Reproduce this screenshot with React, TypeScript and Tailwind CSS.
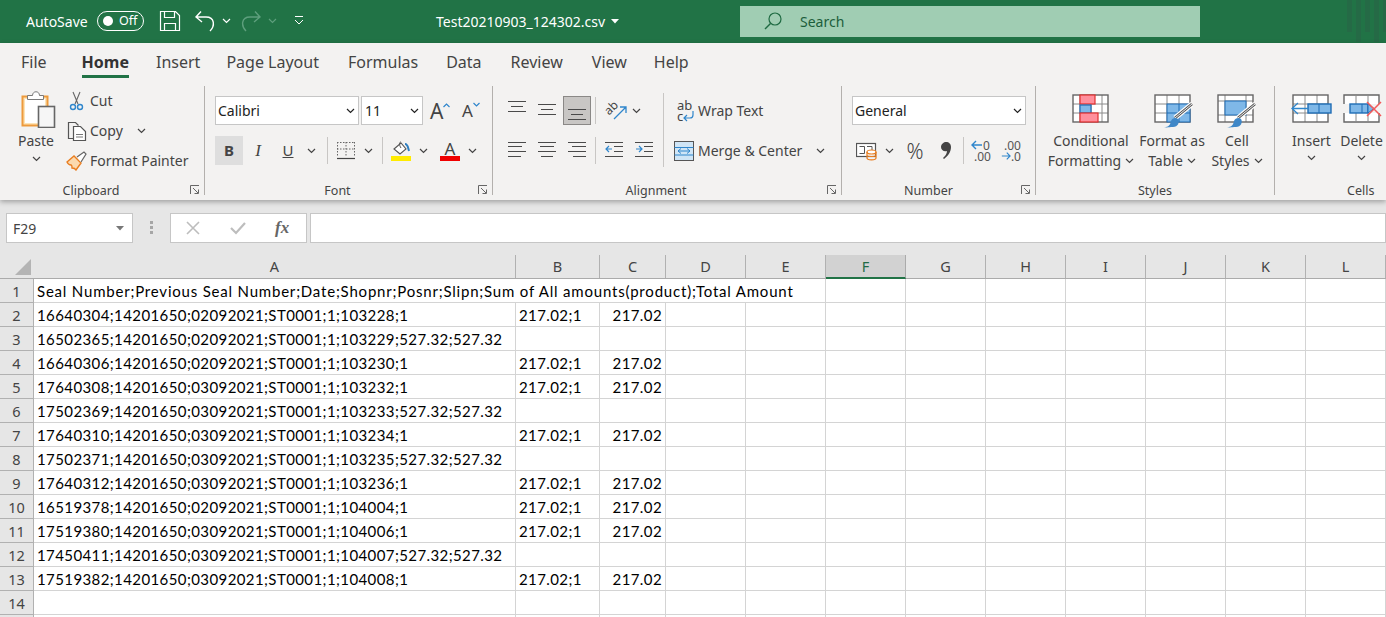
import React from "react";

const rows: [string, string, string][] = [
  ["16640304;14201650;02092021;ST0001;1;103228;1", "217.02;1", "217.02"],
  ["16502365;14201650;02092021;ST0001;1;103229;527.32;527.32", "", ""],
  ["16640306;14201650;02092021;ST0001;1;103230;1", "217.02;1", "217.02"],
  ["17640308;14201650;03092021;ST0001;1;103232;1", "217.02;1", "217.02"],
  ["17502369;14201650;03092021;ST0001;1;103233;527.32;527.32", "", ""],
  ["17640310;14201650;03092021;ST0001;1;103234;1", "217.02;1", "217.02"],
  ["17502371;14201650;03092021;ST0001;1;103235;527.32;527.32", "", ""],
  ["17640312;14201650;03092021;ST0001;1;103236;1", "217.02;1", "217.02"],
  ["16519378;14201650;02092021;ST0001;1;104004;1", "217.02;1", "217.02"],
  ["17519380;14201650;03092021;ST0001;1;104006;1", "217.02;1", "217.02"],
  ["17450411;14201650;03092021;ST0001;1;104007;527.32;527.32", "", ""],
  ["17519382;14201650;03092021;ST0001;1;104008;1", "217.02;1", "217.02"],
];

const columns = ["A", "B", "C", "D", "E", "F", "G", "H", "I", "J", "K", "L"];
const gridCols = "grid grid-cols-[34px_482px_84px_66px_80px_80px_80px_80px_80px_80px_80px_80px_80px]";
const cellFont = "font-['Lato',sans-serif] text-[15px] tracking-[0.4px] text-black";
const cell = "border-r border-b border-[#d4d4d4] h-6 overflow-hidden whitespace-nowrap leading-[24px]";
const rowHead = "h-6 bg-[#e6e6e6] border-r border-b border-[#b1b1b1] text-center leading-[24px] text-[#444] font-['Noto_Sans',sans-serif] text-[14.5px] tracking-normal";

function Chev({ color = "#444", className = "" }: { color?: string; className?: string }) {
  return (
    <svg width="9" height="6" viewBox="0 0 9 6" className={className}>
      <path d="M1 1l3.500 3.500L8 1" fill="none" stroke={color} strokeWidth="1.2" />
    </svg>
  );
}

function Launcher() {
  return (
    <svg width="10" height="10" viewBox="0 0 10 10" className="absolute right-[4px] top-0">
      <path d="M.5 9V.5H9" fill="none" stroke="#666" />
      <path d="M3 3l5 5M8.500 4.500v4h-4" fill="none" stroke="#666" />
    </svg>
  );
}

function Group({ width, label, labelPad = "", children }: { width: string; label: string; labelPad?: string; children: React.ReactNode }) {
  return (
    <div className={`${width} h-[109px] shrink-0 flex flex-col border-r border-[#b3b0ad]`}>
      <div className="flex-1 min-h-0">{children}</div>
      <div className="relative h-[10px] text-center text-[12.5px] text-[#444]">
        <div className={`leading-[12px] ${labelPad}`}>{label}</div>
        {label !== "Styles" && <Launcher />}
      </div>
    </div>
  );
}

function Lines({ kind }: { kind: "top" | "middle" | "bottom" | "left" | "center" | "right" }) {
  const sets: Record<string, string> = {
    top: "M0 3.500h18M3 8.500h12M0 13.500h18",
    middle: "M0 6.500h18M3 11.500h12M0 16.500h18",
    bottom: "M0 11.500h18M3 16.500h12M0 21.500h18",
    left: "M0 4.500h18M0 8.500h14M0 13.500h18M0 18.500h13",
    center: "M0 4.500h18M2 8.500h14M0 13.500h18M3 18.500h12",
    right: "M0 4.500h18M4 8.500h14M0 13.500h18M5 18.500h13",
  };
  return (
    <svg width="18" height="25" viewBox="0 0 18 25">
      <path d={sets[kind]} stroke="#4a4a4a" strokeWidth="1" fill="none" />
    </svg>
  );
}

function PasteIcon() {
  return (
    <svg width="36" height="38" viewBox="0 0 36 38" className="ml-[3px]">
      <rect x="2.500" y="6.500" width="25" height="29" fill="#fde3b5" stroke="#ed9a3c" strokeWidth="2" />
      <rect x="5" y="9" width="20" height="24" fill="#fff" />
      <path d="M7.500 9.500v-4h5c0-5 7-5 7 0h4v4z" fill="#fff" stroke="#7a7a7a" />
      <rect x="18.500" y="16.500" width="16" height="21" fill="#f6f6f6" stroke="#666" strokeWidth="1.6" />
    </svg>
  );
}

// grid shared by the style and cell icons, 35x27 with three columns
function Grid({ dx, cols = [12, 24], rowsAt = [9, 18] }: { dx: number; cols?: number[]; rowsAt?: number[] }) {
  const d = [
    ...cols.map((c) => `M${c + dx} 1v27`),
    ...rowsAt.map((r) => `M${dx} ${r + 1}h35`),
  ].join("");
  return (
    <>
      <rect x={dx} y="1" width="35" height="27" fill="#fff" />
      <path d={d} stroke="#8a8a8a" strokeWidth="1" fill="none" />
      <rect x={dx} y="1" width="35" height="27" fill="none" stroke="#666" strokeWidth="1.4" />
    </>
  );
}

function Brush({ dx }: { dx: number }) {
  return (
    <g transform={`translate(${dx} 0)`}>
      <path d="M37 10L20 24" stroke="#fff" strokeWidth="5" />
      <path d="M37 10L20 24" stroke="#555" strokeWidth="2.800" />
      <path d="M37 10L20 24" stroke="#eee" strokeWidth="1" />
      <path d="M9 33c5 0 6-2 7-6 1-3 5-4 7-2 2 3 0 8-5 8-4 0-6 1-9 0z" fill="#3f87c7" />
    </g>
  );
}

export default function App() {
  return (
    <div className="w-[1386px] h-[617px] overflow-hidden bg-[#e6e6e6] font-['Noto_Sans',sans-serif]">
      {/* Title bar */}
      <div className="relative h-[43px] pb-[1px] bg-[#217346] flex items-center text-white">
        <span className="ml-[26px] text-[14px] w-[71px]">AutoSave</span>
        <div className="w-[47px] h-[20px] rounded-full border border-white flex items-center">
          <span className="ml-[5px] w-[10px] h-[10px] rounded-full bg-white" />
          <span className="ml-[6px] text-[12.5px]">Off</span>
        </div>
        <svg width="22" height="22" viewBox="0 0 22 22" className="ml-[15px]">
          <path d="M1.500 1.500h15l4 4v15h-19z M5.500 1.500v6h10v-6 M5.500 20.500v-7h11v7" fill="none" stroke="#fff" strokeWidth="1.2" />
        </svg>
        <svg width="22" height="22" viewBox="0 0 22 22" className="ml-[13px]">
          <path d="M7 1.500L2 7l6 5M2 7h10c9 0 9 9 4 14" fill="none" stroke="#fff" strokeWidth="1.4" />
        </svg>
        <Chev color="#fff" className="ml-[6px]" />
        <svg width="22" height="22" viewBox="0 0 22 22" className="ml-[9px]">
          <path d="M15 1.500L20 7l-6 5M20 7H10c-9 0-9 9-4 14" fill="none" stroke="#5e9f7d" strokeWidth="1.4" />
        </svg>
        <Chev color="#5e9f7d" className="ml-[6px]" />
        <svg width="10" height="10" viewBox="0 0 10 10" className="ml-[17px]">
          <path d="M1 .5h8M1 4l4 4 4-4" fill="none" stroke="#fff" />
        </svg>
        <span className="ml-[132px] text-[14px] w-[175px]">Test20210903_124302.csv</span>
        <svg width="8" height="5" viewBox="0 0 8 5"><path d="M0 0h8L4 4.500z" fill="#fff" /></svg>
        <div className="ml-[121px] w-[460px] h-[31px] bg-[#a0cdb3] flex items-center">
          <svg width="18" height="18" viewBox="0 0 18 18" className="ml-[24px]">
            <circle cx="11" cy="7" r="6" fill="none" stroke="#1e6a42" strokeWidth="1.2" />
            <path d="M6.500 11.500L1 17" stroke="#1e6a42" strokeWidth="1.4" />
          </svg>
          <span className="ml-[18px] text-[14px] text-[#1d5e3b]">Search</span>
        </div>
        <div className="ml-auto self-start flex gap-[4px] w-[39px] overflow-hidden">
          <span className="w-[5px] h-[32px] shrink-0 bg-[#256a46]" />
          <span className="w-[5px] h-[42px] shrink-0 bg-[#256a46]" />
          <span className="w-[5px] h-[32px] shrink-0 bg-[#256a46]" />
          <span className="w-[5px] h-[42px] shrink-0 bg-[#256a46]" />
          <span className="w-[5px] h-[32px] shrink-0 bg-[#256a46]" />
        </div>
      </div>

      {/* Ribbon */}
      <div className="relative h-[157px] bg-[#f3f2f1] shadow-[0_2px_5px_rgba(0,0,0,0.3)]">
        {/* Tabs */}
        <div className="h-[39px] pl-[21px] flex text-[16px] text-[#444] leading-[38px]">
          <span className="mr-[35px]">File</span>
          <span className="mr-[27px] h-[35px] font-bold text-[#333] border-b-[3px] border-[#217346]">Home</span>
          <span className="mr-[26px]">Insert</span>
          <span className="mr-[29px]">Page Layout</span>
          <span className="mr-[28px]">Formulas</span>
          <span className="mr-[29px]">Data</span>
          <span className="mr-[29px]">Review</span>
          <span className="mr-[27px]">View</span>
          <span>Help</span>
        </div>

        <div className="mt-[4px] flex text-[14px] text-[#444]">
          {/* Clipboard */}
          <Group width="w-[205px]" label="Clipboard" labelPad="pr-[22px]">
            <div className="flex">
              <div className="ml-[6px] w-[60px] pt-[4px] flex flex-col items-center">
                <PasteIcon />
                <span className="mt-[3px] leading-[20px]">Paste</span>
                <Chev className="mt-[5px]" />
              </div>
              <div className="flex flex-col">
                <div className="h-[30px] flex items-center">
                  <svg width="22" height="20" viewBox="0 0 22 20">
                    <path d="M7 1l5 12M14 1L9 13" stroke="#666" strokeWidth="1.1" fill="none" />
                    <circle cx="7" cy="16" r="2.500" fill="none" stroke="#2f86cc" strokeWidth="1.4" />
                    <circle cx="14" cy="16" r="2.500" fill="none" stroke="#2f86cc" strokeWidth="1.4" />
                  </svg>
                  <span className="ml-[2px] pb-[2px]">Cut</span>
                </div>
                <div className="h-[30px] flex items-center">
                  <svg width="22" height="20" viewBox="0 0 22 20">
                    <path d="M7.500 17.500h-5V1.500h7l3 3" fill="none" stroke="#555" strokeWidth="1.2" />
                    <path d="M7.500 5.500h7l5 5v9h-12z" fill="#fff" stroke="#555" strokeWidth="1.2" />
                    <path d="M10 13.500h7M10 16h7" stroke="#777" />
                  </svg>
                  <span className="ml-[2px] pb-[2px]">Copy</span>
                  <Chev className="ml-[14px]" />
                </div>
                <div className="h-[30px] flex items-center">
                  <svg width="22" height="20" viewBox="0 0 22 20">
                    <path d="M1 11l7-6 7 7-5 7c-1-2-3-2-4-2 0-1 0-3-1-3-1 0-3-1-4-3z" fill="#fbd9ae" stroke="#e97d1f" strokeWidth="1.4" />
                    <path d="M11 6l7-5 2 2-5 8" fill="#fff" stroke="#666" strokeWidth="1.2" />
                  </svg>
                  <span className="ml-[2px] pb-[2px]">Format Painter</span>
                </div>
              </div>
            </div>
          </Group>

          {/* Font */}
          <Group width="w-[288px]" label="Font" labelPad="pr-[22px]">
            <div className="pt-[10px] pl-[10px]">
              <div className="flex items-center h-[29px]">
                <div className="w-[144px] h-[29px] bg-white border border-[#c6c6c6] flex items-center justify-between pl-[2px] pr-[3px] text-[#222]">
                  Calibri <Chev color="#222" />
                </div>
                <div className="ml-[2px] w-[62px] h-[29px] bg-white border border-[#c6c6c6] flex items-center justify-between pl-[3px] pr-[3px] text-[#222]">
                  11 <Chev color="#222" />
                </div>
                <div className="ml-[7px] flex items-start w-[30px]">
                  <span className="text-[21px] leading-[24px]">A</span>
                  <svg width="7" height="5" viewBox="0 0 7 5" className="mt-[4px]"><path d="M.5 4l3-3 3 3" fill="none" stroke="#2f86cc" strokeWidth="1.2" /></svg>
                </div>
                <div className="ml-[2px] flex items-start">
                  <span className="text-[17px] leading-[26px]">A</span>
                  <svg width="7" height="5" viewBox="0 0 7 5" className="mt-[4px]"><path d="M.5 1l3 3 3-3" fill="none" stroke="#2f86cc" strokeWidth="1.2" /></svg>
                </div>
              </div>
              <div className="mt-[11px] flex items-center h-[29px]">
                <div className="w-[28px] h-[29px] bg-[#dedede] flex items-center justify-center font-bold text-[15px]">B</div>
                <span className="w-[30px] text-center font-['Liberation_Serif',serif] italic text-[17px]">I</span>
                <span className="w-[30px] text-center underline text-[15px]">U</span>
                <Chev className="ml-[4px]" />
                <span className="ml-[11px] w-px h-[27px] bg-[#c8c6c4]" />
                <svg width="20" height="20" viewBox="0 0 20 20" className="ml-[8px]">
                  <path d="M1.500 1v14M10 1v14M18.500 1v14M1 1.500h18M1 8h18" fill="none" stroke="#666" strokeDasharray="1.500 1.500" />
                  <path d="M1 17.500h18" stroke="#444" strokeWidth="1.2" />
                </svg>
                <Chev className="ml-[8px]" />
                <span className="ml-[9px] w-px h-[27px] bg-[#c8c6c4]" />
                <div className="ml-[8px] w-[20px] flex flex-col items-center">
                  <svg width="20" height="15" viewBox="0 0 20 15">
                    <path d="M3 8l7-6 5 6-6 5z" fill="#fff" stroke="#555" strokeWidth="1.1" />
                    <path d="M10 1c-2 0-2 3 0 6" fill="none" stroke="#555" />
                    <path d="M14 3c3 0 3 4 4 7" fill="none" stroke="#2f7fc1" strokeWidth="2" />
                  </svg>
                  <span className="w-[20px] h-[5px] bg-[#ffeb00]" />
                </div>
                <Chev className="ml-[8px]" />
                <div className="ml-[12px] w-[20px] flex flex-col items-center">
                  <span className="text-[17px] leading-[15px]">A</span>
                  <span className="w-[20px] h-[5px] bg-[#f00000]" />
                </div>
                <Chev className="ml-[8px]" />
              </div>
            </div>
          </Group>

          {/* Alignment */}
          <Group width="w-[349px]" label="Alignment" labelPad="pr-[22px]">
            <div className="pt-[10px] flex">
              <div className="ml-[15px]">
                <div className="flex items-center h-[29px]">
                  <span className="w-[30px]"><Lines kind="top" /></span>
                  <span className="w-[25px]"><Lines kind="middle" /></span>
                  <span className="w-[28px] h-[29px] bg-[#c8c6c4] border border-[#8a8886] flex items-center justify-center"><Lines kind="bottom" /></span>
                  <span className="ml-[4px] w-px h-[27px] bg-[#c8c6c4]" />
                  <div className="ml-[8px] w-[24px] flex items-center">
                    <span className="text-[12px] leading-[12px] -rotate-45 -mt-[6px]">ab</span>
                    <svg width="14" height="14" viewBox="0 0 14 14" className="-ml-[5px] mt-[4px]">
                      <path d="M1 13L13 1M7 1h6v6" fill="none" stroke="#2f86cc" strokeWidth="1.3" />
                    </svg>
                  </div>
                  <Chev className="ml-[4px]" />
                </div>
                <div className="mt-[11px] flex items-center h-[29px]">
                  <span className="w-[30px]"><Lines kind="left" /></span>
                  <span className="w-[30px]"><Lines kind="center" /></span>
                  <span className="w-[23px]"><Lines kind="right" /></span>
                  <span className="ml-[4px] w-px h-[27px] bg-[#c8c6c4]" />
                  <svg width="18" height="25" viewBox="0 0 18 25" className="ml-[9px]">
                    <path d="M0 4.500h18M9 8.500h9M9 13.500h9M0 18.500h18" stroke="#4a4a4a" fill="none" />
                    <path d="M7 11H1M4 8l-3 3 3 3" stroke="#2f86cc" strokeWidth="1.2" fill="none" />
                  </svg>
                  <svg width="18" height="25" viewBox="0 0 18 25" className="ml-[12px]">
                    <path d="M0 4.500h18M9 8.500h9M9 13.500h9M0 18.500h18" stroke="#4a4a4a" fill="none" />
                    <path d="M1 11h6M4 8l3 3-3 3" stroke="#2f86cc" strokeWidth="1.2" fill="none" />
                  </svg>
                </div>
              </div>
              <span className="ml-[10px] -mt-[3px] w-px h-[74px] bg-[#c8c6c4]" />
              <div className="ml-[9px]">
                <div className="flex items-center h-[29px]">
                  <div className="ml-[4px] w-[18px] flex flex-col text-[13px] leading-[11px]">
                    <span>ab</span>
                    <div className="flex items-center">
                      <span>c</span>
                      <svg width="11" height="11" viewBox="0 0 11 11">
                        <path d="M10 0v4c0 2-1 3-3 3H1M4 4L1 7l3 3" fill="none" stroke="#2f86cc" strokeWidth="1.2" />
                      </svg>
                    </div>
                  </div>
                  <span className="ml-[3px]">Wrap Text</span>
                </div>
                <div className="mt-[11px] flex items-center h-[29px]">
                  <svg width="20" height="20" viewBox="0 0 20 20" className="ml-[1px]">
                    <rect x=".5" y=".5" width="19" height="19" fill="#cfe5f6" stroke="#555" />
                    <path d="M.5 6.500h19M.5 14h19" stroke="#2f86cc" />
                    <path d="M4 10h12M7 7.500L4 10l3 2.500M13 7.500l3 2.500-3 2.500" fill="none" stroke="#2f86cc" />
                  </svg>
                  <span className="ml-[4px]">Merge &amp; Center</span>
                  <Chev className="ml-[14px]" />
                </div>
              </div>
            </div>
          </Group>

          {/* Number */}
          <Group width="w-[194px]" label="Number" labelPad="pr-[20px]">
            <div className="pt-[10px] pl-[10px]">
              <div className="w-[174px] h-[29px] bg-white border border-[#c6c6c6] flex items-center justify-between pl-[2px] pr-[3px] text-[#222]">
                General <Chev color="#222" />
              </div>
              <div className="mt-[11px] flex items-center h-[29px]">
                <svg width="21" height="20" viewBox="0 0 21 20" className="ml-[4px]">
                  <rect x=".5" y="2.500" width="19" height="13" fill="#fff" stroke="#555" strokeWidth="1.2" />
                  <path d="M3.500 5.500h5v7h-5M11 5.500h5v4" fill="none" stroke="#555" />
                  <ellipse cx="15.500" cy="11" rx="4.500" ry="2" fill="#fff" stroke="#e97d1f" strokeWidth="1.2" />
                  <path d="M11 11v6c0 2.500 9 2.500 9 0v-6M11 14c0 2 9 2 9 0" fill="none" stroke="#e97d1f" strokeWidth="1.2" />
                </svg>
                <Chev className="ml-[8px]" />
                <span className="ml-[11px] w-[20px] text-center text-[21px] leading-[24px] font-light">%</span>
                <svg width="10" height="17" viewBox="0 0 10 17" className="ml-[16px]">
                  <path d="M5 0c3 0 5 2 5 5 0 5-3 9-7 12l-1-1c2-2 4-4 4-7-3 1-6-1-6-4 0-3 3-5 5-5z" fill="#444" />
                </svg>
                <span className="ml-[12px] w-px h-[27px] bg-[#c8c6c4]" />
                <div className="ml-[7px] w-[20px] flex flex-col text-[12px] leading-[11px] text-[#555]">
                  <div className="flex items-center">
                    <svg width="12" height="10" viewBox="0 0 12 10">
                      <path d="M11 5H1M5 1L1 5l4 4" fill="none" stroke="#2f86cc" strokeWidth="1.4" />
                    </svg>
                    <span>0</span>
                  </div>
                  <span className="pl-[3px]">.00</span>
                </div>
                <div className="ml-[10px] w-[20px] flex flex-col text-[12px] leading-[11px] text-[#555]">
                  <span className="pl-[3px]">.00</span>
                  <div className="flex items-center">
                    <svg width="12" height="10" viewBox="0 0 12 10">
                      <path d="M1 5h10M7 1l4 4-4 4" fill="none" stroke="#2f86cc" strokeWidth="1.4" />
                    </svg>
                    <span>.0</span>
                  </div>
                </div>
              </div>
            </div>
          </Group>

          {/* Styles */}
          <Group width="w-[239px]" label="Styles">
            <div className="ml-[8px] pt-[8px] flex text-center leading-[20px]">
              <div className="w-[94px] flex flex-col items-center">
                <div className="h-[37px]">
                  <svg width="42" height="34" viewBox="0 0 42 34">
                    <Grid dx={3} cols={[7, 18, 29]} />
                    <rect x="10" y="1" width="15" height="9" fill="#ff8f9c" stroke="#e02f2f" strokeWidth="1.2" />
                    <rect x="10" y="11" width="11" height="8" fill="#7fb8e8" stroke="#1f6db5" strokeWidth="1.2" />
                    <rect x="10" y="19" width="18" height="9" fill="#ff8f9c" stroke="#e02f2f" strokeWidth="1.2" />
                  </svg>
                </div>
                <span>Conditional</span>
                <span className="flex items-center">Formatting<Chev className="ml-[4px]" /></span>
              </div>
              <div className="w-[68px] flex flex-col items-center">
                <div className="h-[37px]">
                  <svg width="42" height="34" viewBox="0 0 42 34">
                    <Grid dx={4} />
                    <rect x="16" y="10" width="23" height="18" fill="#7fb8e8" stroke="#1f6db5" />
                    <path d="M28 10v18M16 19h23" stroke="#1f6db5" />
                    <Brush dx={4} />
                  </svg>
                </div>
                <span>Format as</span>
                <span className="flex items-center">Table<Chev className="ml-[4px]" /></span>
              </div>
              <div className="w-[62px] flex flex-col items-center">
                <div className="h-[37px]">
                  <svg width="42" height="34" viewBox="0 0 42 34">
                    <Grid dx={2} cols={[7, 28]} rowsAt={[6, 20]} />
                    <rect x="9" y="7" width="21" height="14" fill="#7fb8e8" stroke="#1f6db5" />
                    <Brush dx={2} />
                  </svg>
                </div>
                <span>Cell</span>
                <span className="flex items-center">Styles<Chev className="ml-[4px]" /></span>
              </div>
            </div>
          </Group>

          {/* Cells */}
          <div className="w-[111px] shrink-0 h-[109px] flex flex-col overflow-visible">
            <div className="flex-1 pt-[8px] flex text-center leading-[20px]">
              <div className="ml-[11px] w-[52px] flex flex-col items-center">
                <div className="h-[37px]">
                  <svg width="42" height="30" viewBox="0 0 42 30">
                    <Grid dx={3} />
                    <rect x="18" y="10" width="23" height="9" fill="#7fb8e8" stroke="#1f6db5" strokeWidth="1.4" />
                    <path d="M29 10v9" stroke="#1f6db5" />
                    <path d="M18 14.500H2M8 9l-6 5.500 6 5.500" fill="none" stroke="#2f86cc" strokeWidth="1.3" />
                  </svg>
                </div>
                <span>Insert</span>
                <Chev className="mt-[4px]" />
              </div>
              <div className="w-[50px] flex flex-col items-center">
                <div className="h-[37px]">
                  <svg width="42" height="30" viewBox="0 0 42 30">
                    <path d="M4 10V1h35v9M4 19v9h35v-9" fill="#fff" stroke="#666" strokeWidth="1.4" />
                    <path d="M16 1v9M28 1v9M16 19v9M28 19v9" stroke="#8a8a8a" />
                    <rect x="10" y="10" width="18" height="9" fill="#7fb8e8" stroke="#1f6db5" strokeWidth="1.4" />
                    <path d="M22 10v9M28 10l6 4.500-6 4.500z" stroke="#1f6db5" fill="#7fb8e8" />
                    <path d="M27 8l14 14M41 8L27 22" stroke="#f25a5a" strokeWidth="1.5" />
                  </svg>
                </div>
                <span>Delete</span>
                <Chev className="mt-[4px]" />
              </div>
            </div>
            <div className="h-[10px] leading-[12px] pl-[72px] text-[12.5px]">Cells</div>
          </div>
        </div>
      </div>

      {/* Formula bar */}
      <div className="h-[55px] pt-[13px] flex items-start">
        <div className="ml-[6px] w-[127px] h-[30px] bg-white border border-[#c6c6c6] flex items-center justify-between pl-[6px] pr-[8px] text-[14px] text-[#444]">
          F29
          <svg width="8" height="5" viewBox="0 0 8 5"><path d="M0 0h8L4 4.500z" fill="#777" /></svg>
        </div>
        <div className="ml-[17px] mt-[8px] w-[3px] flex flex-col gap-[2px]">
          <span className="h-[3px] bg-[#a6a6a6]" />
          <span className="h-[3px] bg-[#a6a6a6]" />
          <span className="h-[3px] bg-[#a6a6a6]" />
        </div>
        <div className="ml-[17px] w-[137px] h-[30px] bg-white border border-[#c6c6c6] flex items-center">
          <svg width="14" height="14" viewBox="0 0 14 14" className="ml-[15px]">
            <path d="M1 1l12 12M13 1L1 13" stroke="#bdbdbd" strokeWidth="1.6" />
          </svg>
          <svg width="16" height="14" viewBox="0 0 16 14" className="ml-[30px]">
            <path d="M1 7l5 5 9-10" fill="none" stroke="#bdbdbd" strokeWidth="2.2" />
          </svg>
          <span className="ml-[29px] font-['Liberation_Serif',serif] italic font-bold text-[17px] text-[#666]">fx</span>
        </div>
        <div className="ml-[3px] flex-1 h-[30px] bg-white border border-[#c6c6c6]" />
      </div>

      {/* Sheet */}
      <div className="bg-white">
        <div className={`${gridCols} h-6 bg-[#e6e6e6] border-b border-[#ababab] text-[14.5px] text-[#444]`}>
          <div className="flex items-end justify-end pr-[3px] pb-[3px] h-[23px]">
            <span className="w-[16px] h-[16px] bg-[#b4b4b4] [clip-path:polygon(100%_0,100%_100%,0_100%)]" />
          </div>
          {columns.map((c) => (
            <div
              key={c}
              className={
                c === "F"
                  ? "h-6 text-center leading-[23px] bg-[#d2d2d2] text-[#1f6b45] border-r border-[#ababab] border-b-2 border-b-[#217346]"
                  : "h-[23px] text-center leading-[23px] border-r border-[#b1b1b1]"
              }
            >
              {c}
            </div>
          ))}
        </div>
        <div className={`${gridCols} ${cellFont}`}>
          <div className={rowHead}>1</div>
          <div className={`${cell} col-span-5 pl-[3px] tracking-[0.8px]`}>
            Seal Number;Previous Seal Number;Date;Shopnr;Posnr;Slipn;Sum of All amounts(product);Total Amount
          </div>
          {columns.slice(5).map((c) => <div key={c} className={cell} />)}
        </div>
        {rows.map((r, i) => (
          <div key={i} className={`${gridCols} ${cellFont}`}>
            <div className={rowHead}>{i + 2}</div>
            <div className={`${cell} pl-[3px]`}>{r[0]}</div>
            <div className={`${cell} pl-[3px]`}>{r[1]}</div>
            <div className={`${cell} text-right pr-[3px]`}>{r[2]}</div>
            {columns.slice(3).map((c) => <div key={c} className={cell} />)}
          </div>
        ))}
        <div className={`${gridCols} ${cellFont}`}>
          <div className={rowHead}>14</div>
          {columns.map((c) => <div key={c} className={cell} />)}
        </div>
        <div className={gridCols}>
          <div className="h-6 bg-[#e6e6e6] border-r border-[#b1b1b1]" />
          {columns.map((c) => <div key={c} className="h-6 border-r border-[#d4d4d4]" />)}
        </div>
      </div>
    </div>
  );
}
